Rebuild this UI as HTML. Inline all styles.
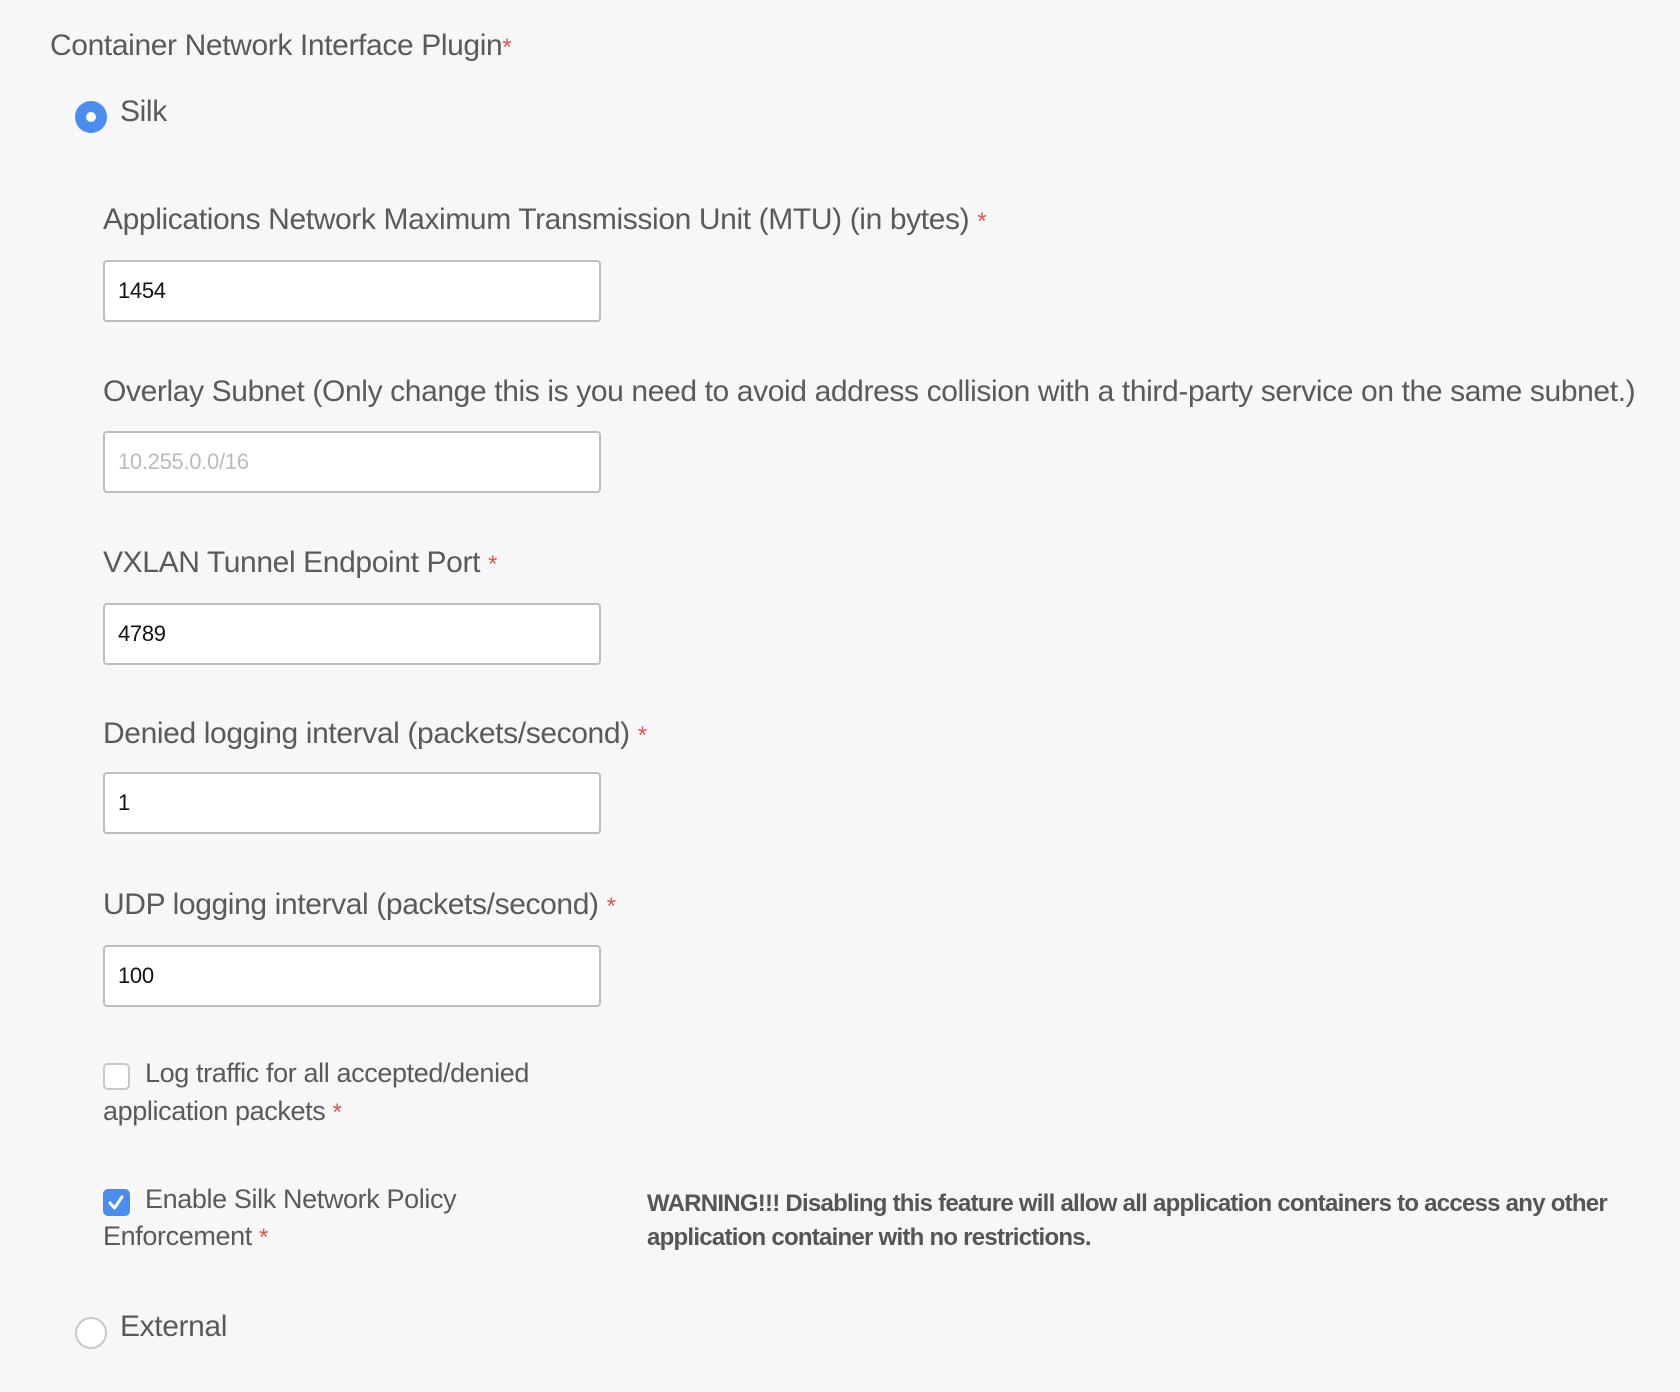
<!DOCTYPE html>
<html><head><meta charset="utf-8"><style>
body{margin:0;width:1680px;height:1392px;background:#f7f7f7;font-family:"Liberation Sans",sans-serif;color:#5a5a5a;position:relative;overflow:hidden}
.t{position:absolute;white-space:nowrap;font-size:30px;line-height:34px;letter-spacing:-0.38px}
.s{font-size:27px}
.r{color:#e0544a;font-size:24px}
.in{position:absolute;left:103px;width:494px;height:58px;border:2px solid #bdbdbd;border-radius:4px;background:#fff;box-sizing:content-box}
.in span{position:absolute;left:13px;top:16px;font-size:22px;color:#111;letter-spacing:-0.3px}
.rad{position:absolute;width:32px;height:32px;border-radius:50%;box-sizing:border-box}
.cb{position:absolute;left:103px;width:27px;height:27px;border-radius:5px;box-sizing:border-box}
</style></head><body>
<div class="t" style="left:50px;top:29px">Container Network Interface Plugin<span class="r">*</span></div>
<div class="rad" style="left:75px;top:101px;background:#4b8def"><div style="position:absolute;left:11px;top:11px;width:10px;height:10px;border-radius:50%;background:#fff"></div></div>
<div class="t" style="left:120px;top:95px">Silk</div>

<div class="t" style="left:103px;top:203px">Applications Network Maximum Transmission Unit (MTU) (in bytes) <span class="r">*</span></div>
<div class="in" style="top:260px"><span>1454</span></div>

<div class="t" style="left:103px;top:375px">Overlay Subnet (Only change this is you need to avoid address collision with a third-party service on the same subnet.)</div>
<div class="in" style="top:431px"><span style="color:#bbb">10.255.0.0/16</span></div>

<div class="t" style="left:103px;top:546px">VXLAN Tunnel Endpoint Port <span class="r">*</span></div>
<div class="in" style="top:603px"><span>4789</span></div>

<div class="t" style="left:103px;top:717px">Denied logging interval (packets/second) <span class="r">*</span></div>
<div class="in" style="top:772px"><span>1</span></div>

<div class="t" style="left:103px;top:888px">UDP logging interval (packets/second) <span class="r">*</span></div>
<div class="in" style="top:945px"><span>100</span></div>

<div class="cb" style="top:1063px;border:2px solid #c8c8c8;background:#fff"></div>
<div class="t s" style="left:145px;top:1056px">Log traffic for all accepted/denied</div>
<div class="t s" style="left:103px;top:1094px">application packets <span class="r">*</span></div>

<div class="cb" style="top:1189px;background:#4b8def"><svg width="27" height="27" viewBox="0 0 27 27"><path d="M7 14 L11.5 19 L19 8" stroke="#fff" stroke-width="3" fill="none" stroke-linecap="round" stroke-linejoin="round"/></svg></div>
<div class="t s" style="left:145px;top:1182px">Enable Silk Network Policy</div>
<div class="t s" style="left:103px;top:1219px">Enforcement <span class="r">*</span></div>

<div class="t" style="left:647px;top:1187px;font-size:24px;font-weight:bold;color:#555;letter-spacing:-0.75px">WARNING!!! Disabling this feature will allow all application containers to access any other</div>
<div class="t" style="left:647px;top:1221px;font-size:24px;font-weight:bold;color:#555;letter-spacing:-0.75px">application container with no restrictions.</div>

<div class="rad" style="left:75px;top:1317px;border:2px solid #c8c8c8;background:#fff"></div>
<div class="t" style="left:120px;top:1310px">External</div>
</body></html>
